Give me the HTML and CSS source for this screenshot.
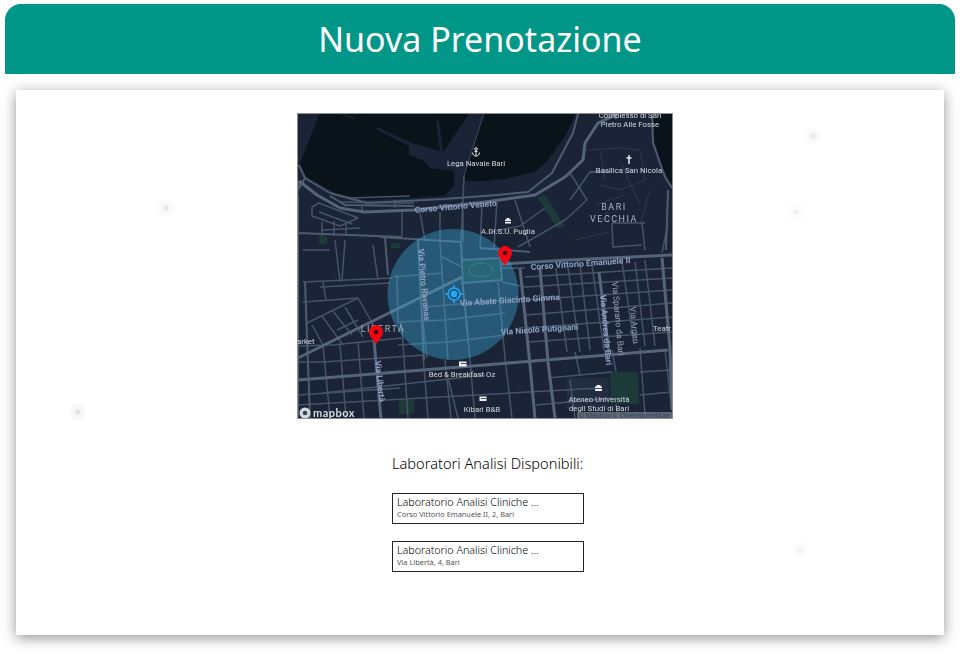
FILE: index.html
```html
<!DOCTYPE html>
<html lang="it">
<head>
<meta charset="utf-8">
<title>Nuova Prenotazione</title>
<link rel="stylesheet" href="styles.css">
</head>
<body>
<header class="topbar"><h1 class="topbar-title">Nuova Prenotazione</h1></header>
<main class="card">
  <div class="map">
    <svg class="map-svg" viewBox="297 113 376 306" width="376" height="306" xmlns="http://www.w3.org/2000/svg" aria-label="Mappa di Bari">
      <rect class="land" x="297" y="113" width="376" height="306"/>
      <path class="water" d="M320 113L299 165L305 176L335 193L365 200L444 196L454 186L454 171L430 168L424 161L409 155L409 146L377 130L377 127L412 143L440 151L436 121L439 121L443 152L454 136L470 113Z"/>
      <path class="water" d="M484 113L464 176L465 181L485 181L505 179L535 172L548 160L566 135L576 113Z"/>
      <path class="water" d="M654 113L653 137L662 167L673 187V113Z"/>
      <path class="land" d="M337 113L354 119L356 118L342 113Z"/>
      <path class="park" d="M537 197L545 195L565 227L557 228ZM463 260L499 258L501 281L464 283ZM319 236h8v8h-8zM391 243h9v5h-9zM399 400h15v14h-15zM610 372h28l1 32h-28z"/>
      <path class="block" d="M567 378h42v30h-42z"/>

      <g class="road-old">
        <path d="M585 150L620 148L640 150L645 180L620 190L600 185M600 150L605 180M622 165L640 205M595 205L625 195M600 225L612 205M650 190L640 225M575 240L610 232"/>
      </g>
      <g class="road-thin">
        <path d="M312 207L319 203L358 218L340 226L312 216ZM319 212L352 224M322 222V236M334 221V236M346 224V236M322 230L360 228"/>
        <path d="M350 198L410 196M340 202L414 203M362 205V212M395 200V208"/>
        <path d="M402 212V236M420 213L425 240M440 212V242M463 210V242M482 205L480 248M497 200L494 248M515 200L530 247M490 232L520 226L545 208"/>
        <path d="M518 247L565 220L587 200L570 173M570 200L590 172L600 172M497 200L460 205M464 176L461 242"/>
        <path d="M612 223H645M612 223L613 247M612 247L642 245M642 223L645 250M668 223L662 253M590 172H610"/>
        <path d="M303 282L392 278M320 287L390 283M303 302L358 298M332 345L402 338M323 362L425 355M323 393L485 375M297 405L600 388M298 346L332 345M298 362H323"/>
        <path d="M307 323L358 298L375 328M312 325L323 345M332 310L352 335M322 316L343 345M345 307L363 337M358 320L337 330M323 345L370 322"/>
        <path d="M303 250L330 250M335 240L340 282M345 240L342 280M373 245L378 280M323 282L326 300M323 345L330 418M340 345L346 418M358 342L364 418M402 328L408 418M423 355L428 418M445 360L451 418"/>
        <path d="M393 277L443 273M425 307L505 300M397 322L445 320M445 320L505 313M398 345L448 342M448 342L505 335M442 257L462 267M397 275L398 322M422 312L427 358M500 268H525M502 282L525 287"/>
        <path d="M498 282L505 358M440 242L448 360M468 338L475 418M505 358L512 418M556 268L567 352M568 268L580 352M580 265L590 350M592 265L604 350M622 262L634 344M635 262L645 346M645 260L655 346"/>
        <path d="M525 277L672 268M525 287L672 278M526 300L672 290M526 315L672 303M527 328L672 317M529 342L672 332M548 378L612 372M640 372L672 370M448 378L458 418M298 395L400 388M536 405L612 398M640 395L672 392"/>
        <path d="M575 352L580 375M612 350L616 372M640 348L645 415M665 350L672 410M570 380L575 418M616 404L618 418"/>
      </g>
      <g class="road-mid">
        <path d="M299 165L305 178L330 193L367 203L444 199L497 195L528 192L552 173L573 133L578 114"/>
        <path d="M330 196L345 205L414 206"/>
        <path d="M652 114L653 143L665 177L672 188M668 190L666 250"/>
        <path d="M299 181L297 197M305 178L298 190M298 195V419"/>
        <path d="M461 242L463 283L502 280L500 258L462 260M461 242L380 237"/>
        <path d="M385 238L388 275M418 240L424 360M462 278L468 338"/>
        <path d="M305 282L310 418"/>
        <path d="M298 233L402 237M480 248L530 252"/>
      </g>
      <path class="road-hair" d="M484 113L464 176"/>
      <g class="road-wide">
        <path d="M299 181L317 195L340 208L364 212L414 210L485 202L535 195L565 177L583 160L585 143L598 123L618 114"/>
        <path d="M502 264L568 260L672 255"/>
        <path d="M298 358L462 277"/>
        <path d="M298 380L485 365L668 350"/>
        <path d="M520 268L530 365L535 418M540 268L548 362L555 418M599 272L609 352M662 258L670 348L672 410"/>
        <path d="M374 340L381 419"/>
      </g>

      <circle class="radius" cx="453" cy="294.500" r="65.500"/>
      <ellipse class="park-trace" cx="481" cy="270" rx="12" ry="7"/>

      <g class="label-road">
        <text transform="translate(415 213) rotate(-5)">Corso Vittorio Veneto</text>
        <text transform="translate(531 270) rotate(-4)">Corso Vittorio Emanuele II</text>
        <text transform="translate(460 306) rotate(-3.500)">Via Abate Giacinto Gimma</text>
        <text transform="translate(501 335) rotate(-4)">Via Nicolò Putignani</text>
        <text transform="translate(418 249) rotate(85)">Via Pietro Ravanas</text>
        <text transform="translate(375 361) rotate(84)">Via Libertà</text>
        <text transform="translate(600 295) rotate(85)">Via Andrea da Bari</text>
        <text class="label-dim" transform="translate(612 282) rotate(85)">Via Sparano da Bari</text>
        <text class="label-dim" transform="translate(630 307) rotate(85)">Via Argiro</text>
      </g>
      <g class="label-poi">
        <text x="476" y="166" text-anchor="middle">Lega Navale Bari</text>
        <text x="630" y="118" text-anchor="middle">Complesso di San</text>
        <text x="630" y="127" text-anchor="middle">Pietro Alle Fosse</text>
        <text x="629" y="173" text-anchor="middle">Basilica San Nicola</text>
        <text x="508" y="234" text-anchor="middle">A.DI.S.U. Puglia</text>
        <text x="462" y="377" text-anchor="middle">Bed &amp; Breakfast Oz</text>
        <text x="482" y="412" text-anchor="middle">Kibari B&amp;B</text>
        <text x="599" y="402" text-anchor="middle">Ateneo Università</text>
        <text x="599" y="411" text-anchor="middle">degli Studi di Bari</text>
        <text x="297" y="344">arket</text>
        <text x="653" y="331">Teatr</text>
      </g>
      <g class="label-area">
        <text x="614" y="210" text-anchor="middle">BARI</text>
        <text x="614" y="222" text-anchor="middle">VECCHIA</text>
        <text x="383" y="332" text-anchor="middle">LIBERTÀ</text>
      </g>
      <g class="poi-icon">
        <circle cx="476" cy="149" r="1.300"/>
        <path d="M476 150.500v5.500M472.500 152.500c.3 2.500 1.700 3.500 3.500 3.500s3.200-1 3.500-3.500M474.500 151.500h3"/>
        <path class="poi-cross" d="M629 155v9M626.500 158h5"/>
      </g>
      <path class="poi-fill" d="M505 219.500h6v4h-6zM506.500 218h3v2h-3zM459 361.500h7.500v5h-7.500zM479.500 396.500h7v4.500h-7zM595 386.500h7v4.500h-7zM596.500 385h4v2h-4z"/>
      <path class="poi-cut" d="M505 221.500h6M461 363.500h5M481 398.500h5M595 388.500h7"/>

      <g class="locate">
        <circle cx="454" cy="294" r="6"/>
        <path d="M454 285v3M454 300v3M445 294h3M460 294h3"/>
      </g>
      <circle class="locate-dot" cx="454" cy="294" r="3.200"/>

      <path class="pin" d="M505 266c-1-4-7-8-7-13a7 7 0 0 1 14 0c0 5-6 9-7 13z"/>
      <circle class="pin-hole" cx="505" cy="253" r="2.200"/>
      <path class="pin" d="M376 345c-1-4-7-8-7-13a7 7 0 0 1 14 0c0 5-6 9-7 13z"/>
      <circle class="pin-hole" cx="376" cy="332" r="2.200"/>

      <circle class="logo-disc" cx="305" cy="413" r="5.500"/>
      <circle class="logo-hole" cx="305" cy="413" r="2.300"/>
      <text class="logo-text" x="313" y="417">mapbox</text>
      <rect class="attrib-bg" x="577" y="412" width="96" height="7"/>
      <text class="attrib" x="579" y="418">© Mapbox © OpenStreetMap</text>
    </svg>
  </div>

  <section class="labs">
    <h2 class="labs-title">Laboratori Analisi Disponibili:</h2>
    <article class="lab">
      <div class="lab-name">Laboratorio Analisi Cliniche ...</div>
      <div class="lab-address">Corso Vittorio Emanuele II, 2, Bari</div>
    </article>
    <article class="lab">
      <div class="lab-name">Laboratorio Analisi Cliniche ...</div>
      <div class="lab-address">Via Libertà, 4, Bari</div>
    </article>
  </section>
</main>
</body>
</html>
```
FILE: styles.css
```css
* { box-sizing: border-box; }
html, body { height: 100%; }
body {
  margin: 0;
  padding: 4px 5px 0;
  background: #fff;
  font-family: "Noto Sans", "Open Sans", sans-serif;
  color: #111;
  overflow: hidden;
}
.topbar {
  height: 70px;
  background: #009688;
  border-radius: 16px 16px 0 0;
  display: flex;
  align-items: center;
  justify-content: center;
}
.topbar-title {
  margin: 0;
  font-size: 34px;
  font-weight: 400;
  color: #fff;
  line-height: 1;
}
.card {
  width: 928px;
  height: 545px;
  margin: 16px 0 0 11px;
  padding: 23px 0 0 10px;
  display: flex;
  flex-direction: column;
  align-items: center;
  box-shadow: 0 3px 13px rgba(0, 0, 0, .42);
  background:
    radial-gradient(circle at 150px 118px, #dcdcdc 0, #f7f7f7 3px, transparent 11px),
    radial-gradient(circle at 62px 322px, #d4d4d4 0, #f4f4f4 3px, transparent 10px),
    radial-gradient(circle at 797px 46px, #dcdcdc 0, #f7f7f7 3px, transparent 10px),
    radial-gradient(circle at 780px 122px, #e8e8e8 0, #f9f9f9 3px, transparent 10px),
    radial-gradient(circle at 784px 460px, #ebebeb 0, #f9f9f9 3px, transparent 10px),
    #fff;
}
.map {
  width: 376px;
  height: 306px;
  flex: none;
  border: 1px solid #8a8f96;
  overflow: hidden;
}
.map-svg {
  display: block;
  margin: -1px;
  filter: blur(.35px);
}
.land { fill: #1a2436; }
.water { fill: #0a1319; }
.park { fill: #1c3a38; }
.block { fill: #222d41; }
.road-old, .road-thin, .road-mid, .road-wide, .road-hair { fill: none; stroke-linejoin: round; }
.road-old { stroke: #2d394d; stroke-width: 1; }
.road-hair { stroke: #3f4c60; stroke-width: 1; }
.road-thin { stroke: #465468; stroke-width: 1.500; }
.road-mid { stroke: #4e5c71; stroke-width: 2; }
.road-wide { stroke: #566479; stroke-width: 3; }
.radius { fill: rgba(60, 170, 215, .4); }
.park-trace { fill: none; stroke: rgba(120, 170, 160, .3); stroke-width: 1; }
.label-road, .label-poi, .label-area {
  font-family: "Roboto", "Liberation Sans", sans-serif;
}
.label-road { font-size: 8.500px; font-weight: 700; fill: #8fa0c0; }
.label-dim { font-weight: 400; fill: #98a3b4; }
.label-poi { font-size: 7.800px; fill: #d5d9df; }
.label-area { font-size: 9px; letter-spacing: 1.500px; fill: #aeb5c0; }
.poi-icon { fill: none; stroke: #e8eaee; stroke-width: 1; }
.poi-cross { stroke-width: 1.500; }
.poi-fill { fill: #eef0f3; }
.poi-cut { fill: none; stroke: #1a2436; stroke-width: .8; }
.locate { fill: none; stroke: #1ea7ff; stroke-width: 1.600; }
.locate-dot { fill: #1ea7ff; }
.pin { fill: #f00712; }
.pin-hole { fill: #3a0d18; }
.logo-disc { fill: #d6dae0; }
.logo-hole { fill: #3a4354; }
.logo-text {
  font-family: "Lato", "Liberation Sans", sans-serif;
  font-size: 11px;
  font-weight: 700;
  letter-spacing: .5px;
  fill: #d6dae0;
}
.attrib-bg { fill: rgba(150, 158, 170, .55); }
.attrib { font-family: "Liberation Sans", sans-serif; font-size: 7px; fill: #39445a; }
.labs {
  width: 192px;
  margin: 35px 0 0 6px;
}
.labs-title {
  margin: 0 0 20px;
  font-size: 14.600px;
  font-weight: 300;
  color: #000;
  line-height: 19px;
  white-space: nowrap;
}
.lab {
  height: 31px;
  margin-bottom: 17px;
  padding: 1px 4px;
  border: 1px solid #222;
  background: #fff;
}
.lab-name {
  font-size: 10.700px;
  font-weight: 300;
  color: #000;
  line-height: 14px;
  white-space: nowrap;
}
.lab-address {
  font-size: 7.400px;
  line-height: 11px;
  color: #555;
  white-space: nowrap;
}
```
